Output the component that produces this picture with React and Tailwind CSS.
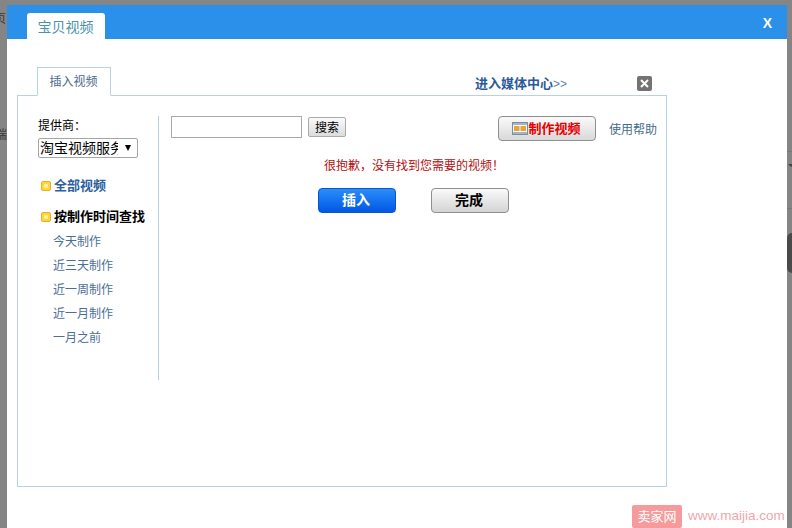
const FONT = "font-['Liberation_Sans','Noto_Sans_CJK_SC',sans-serif]";

function Bullet() {
  return (
    <span className="w-[10px] h-[10px] rounded-[2px] bg-[#fdd835] border border-[#eda93a] flex items-center justify-center shrink-0">
      <span className="w-[4px] h-[4px] bg-[#fff09a] rounded-[1px]" />
    </span>
  );
}

function FilmIcon() {
  return (
    <svg width="16" height="13" viewBox="0 0 16 13" className="shrink-0">
      <rect x="0.5" y="0.5" width="15" height="12" fill="#f4f6f8" stroke="#7d8da0" />
      <rect x="1" y="1" width="14" height="2" fill="#a3b4c7" />
      <rect x="1" y="10" width="14" height="2" fill="#a3b4c7" />
      <rect x="2" y="4" width="5.5" height="5" fill="#e8a33c" />
      <rect x="8.5" y="4" width="5.5" height="5" fill="#e8a33c" />
    </svg>
  );
}

export default function App() {
  const periods = ["今天制作", "近三天制作", "近一周制作", "近一月制作", "一月之前"];
  return (
    <div className={`relative w-[792px] h-[528px] overflow-hidden bg-[#858585] pt-[5px] pl-[7px] ${FONT}`}>
      <span className="absolute left-0 top-[11px] text-[12px] leading-[16px] text-[#3a3a3a] -translate-x-[6px]">页</span>
      <span className="absolute left-0 top-[127px] text-[12px] leading-[16px] text-[#3a3a3a] -translate-x-[5px]">端</span>
      <div className="absolute left-[787px] top-[151px] w-[5px] h-px bg-[#777777]" />
      <div className="absolute left-[788px] top-[164px] w-0 h-0 border-x-[3px] border-x-transparent border-t-[3px] border-t-[#444444]" />
      <div className="absolute left-[787px] top-[208px] w-[5px] h-px bg-[#777777]" />
      <div className="absolute left-[787px] top-[233px] w-[10px] h-[40px] rounded-full bg-[#4a4a4a]" />

      <div className="w-[780px] h-[523px] bg-white">
        <div className="h-[34px] bg-[#2b90e9] pt-[8px] pl-[20px] pr-[15px] flex items-start justify-between">
          <div className="w-[78px] h-[26px] bg-white rounded-t-[3px] flex items-center justify-center pt-[2px] pr-[1px] text-[14px] text-[#4b93ad]">
            宝贝视频
          </div>
          <span className="text-[14px] font-bold text-white leading-[16px] mt-[2px]">X</span>
        </div>

        <div className="pl-[10px] pt-[28px]">
          <div className="relative w-[650px] h-[29px] -mb-px z-10">
            <div className="ml-[20px] w-[74px] h-[29px] bg-white border border-[#b5d3e3] border-b-white flex items-center justify-center pr-[1px] pt-[1px] text-[12px] text-[#4a6a8a]">
              插入视频
            </div>
            <span className="absolute left-[458px] top-[8px] text-[13px] leading-[17px] font-bold text-[#2a5a9a] whitespace-nowrap">
              进入媒体中心<span className="font-normal text-[12px] text-[#5a7fb0]">&gt;&gt;</span>
            </span>
            <span className="absolute left-[620px] top-[9px] w-[15px] h-[15px] rounded-[2px] bg-[#737373] flex items-center justify-center">
              <svg width="9" height="9" viewBox="0 0 9 9">
                <path d="M1 1l7 7M8 1L1 8" stroke="#fff" strokeWidth="2" />
              </svg>
            </span>
          </div>

          <div className="w-[650px] h-[392px] border border-[#b5d3e3] flex items-start pt-[20px]">
            <div className="w-[141px] h-[264px] border-r border-[#b5d3e3] pl-[20px] shrink-0">
              <div className="text-[12px] leading-[16px] text-black mt-[2px]">提供商：</div>
              <div className="mt-[4px] w-[100px] h-[20px] border border-[#a6a6a6] rounded-[2px] flex items-center pl-[1px] text-[14px] text-black">
                <span className="w-[78px] overflow-hidden whitespace-nowrap leading-[18px]">淘宝视频服务</span>
                <span className="ml-[7px] w-0 h-0 border-x-[3.5px] border-x-transparent border-t-[6px] border-t-black" />
              </div>

              <div className="mt-[20px] flex items-center gap-[3px] pl-[3px] h-[16px] text-[13px] font-bold text-[#2f5f9f] whitespace-nowrap">
                <Bullet />全部视频
              </div>
              <div className="mt-[15px] flex items-center gap-[3px] pl-[3px] h-[16px] text-[13px] font-bold text-black whitespace-nowrap">
                <Bullet />按制作时间查找
              </div>
              <ul className="mt-[5px] pl-[15px] flex flex-col">
                {periods.map((p) => (
                  <li key={p} className="h-[24px] leading-[24px] text-[12px] text-[#4a6f98]">{p}</li>
                ))}
              </ul>
            </div>

            <div className="w-[508px] pl-[12px] pr-[10px]">
              <div className="flex items-start">
                <div className="w-[131px] h-[22px] border border-[#a9a9a9] bg-white" />
                <button className="ml-[6px] mt-px w-[38px] h-[20px] border border-[#a9a9a9] rounded-[2px] bg-gradient-to-b from-[#fafafa] to-[#dcdcdc] text-[12px] leading-[18px] pt-px text-black">
                  搜索
                </button>
                <button className="ml-[152px] w-[98px] h-[25px] border border-[#8f8f8f] rounded-[4px] bg-gradient-to-b from-[#fafafa] to-[#d9d9d9] flex items-center justify-center pr-[1px] text-[13px] font-bold text-[#e60000]">
                  <FilmIcon />制作视频
                </button>
                <span className="ml-[13px] mt-[6px] text-[12px] leading-[16px] text-[#3f6d8f] whitespace-nowrap">使用帮助</span>
              </div>
              <p className="mt-[17px] ml-[153px] text-[12px] leading-[16px] text-[#b01010] whitespace-nowrap">
                很抱歉，没有找到您需要的视频！
              </p>
              <div className="mt-[14px] ml-[147px] flex">
                <button className="w-[78px] h-[25px] rounded-[4px] border border-[#0a55c8] bg-gradient-to-b from-[#2a8cf8] to-[#0457e6] pr-[2px] text-[14px] font-bold text-white">
                  插入
                </button>
                <button className="ml-[35px] w-[78px] h-[25px] rounded-[4px] border border-[#8f8f8f] bg-gradient-to-b from-[#fafafa] to-[#d4d4d4] pr-[2px] text-[14px] font-bold text-black">
                  完成
                </button>
              </div>
            </div>
          </div>
        </div>
      </div>

      <div className="absolute left-[632px] top-[505px] flex items-center">
        <span className="w-[50px] h-[23px] bg-[#f79a9c] rounded-[2px] text-white text-[13px] flex items-center justify-center">卖家网</span>
        <span className="ml-[6px] text-[13.5px] text-[#f0a6ad] whitespace-nowrap">www.maijia.com</span>
      </div>
    </div>
  );
}
